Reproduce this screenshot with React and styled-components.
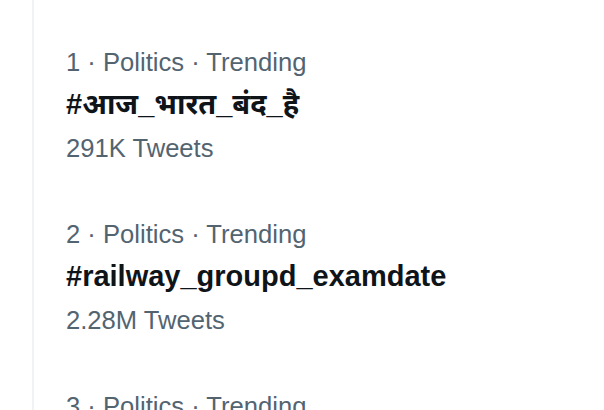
import React from "react";
import styled, { createGlobalStyle } from "styled-components";

const GlobalStyle = createGlobalStyle`
  html, body {
    margin: 0;
    padding: 0;
    background: #ffffff;
    overflow: hidden;
  }
  body {
    font-family: "Liberation Sans", Arial, "Noto Sans Devanagari", "Noto Sans", sans-serif;
    -webkit-font-smoothing: antialiased;
  }
`;

const Page = styled.div`
  width: 604px;
  height: 410px;
  overflow: hidden;
`;

const Column = styled.section`
  margin-left: 32px;
  padding-top: 22px;
  border-left: 2px solid #eff3f4;
  display: flex;
  flex-direction: column;
  min-height: 440px;
`;

const Trend = styled.div`
  display: flex;
  flex-direction: column;
  padding: 24px 32px 30px;
`;

const Meta = styled.div`
  font-size: 25.6px;
  line-height: 32px;
  color: #536471;
  white-space: nowrap;
`;

const Title = styled.div`
  margin-top: 6px;
  font-size: 29px;
  line-height: 40px;
  font-weight: 700;
  color: #0f1419;
  white-space: nowrap;
`;

const Count = styled.div`
  margin-top: 8px;
  font-size: 25.6px;
  line-height: 32px;
  color: #536471;
  white-space: nowrap;
`;

const trends = [
  { rank: 1, category: "Politics", title: "#आज_भारत_बंद_है", count: "291K Tweets" },
  { rank: 2, category: "Politics", title: "#railway_groupd_examdate", count: "2.28M Tweets" },
  { rank: 3, category: "Politics", title: "#BharatBandh", count: "45.2K Tweets" },
];

export default function App() {
  return (
    <Page>
      <GlobalStyle />
      <Column>
        {trends.map((t) => (
          <Trend key={t.rank}>
            <Meta>
              {t.rank} · {t.category} · Trending
            </Meta>
            <Title>{t.title}</Title>
            <Count>{t.count}</Count>
          </Trend>
        ))}
      </Column>
    </Page>
  );
}
